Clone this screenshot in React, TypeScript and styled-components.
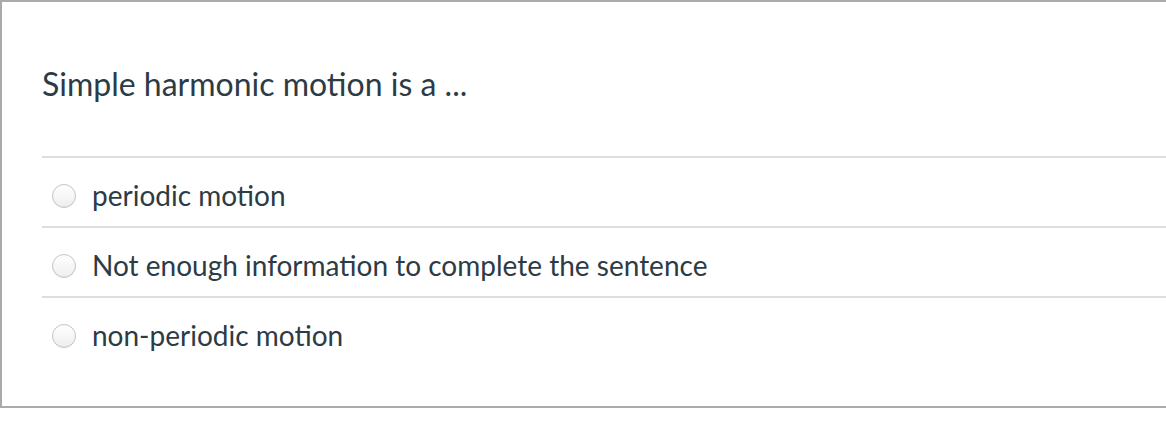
import styled, { createGlobalStyle } from "styled-components";

const GlobalStyle = createGlobalStyle`
	html, body {
		margin: 0;
		padding: 0;
		background: #fff;
		overflow: hidden;
	}
	body {
		font-family: Lato, "Open Sans", "Liberation Sans", sans-serif;
		color: #2d3b45;
	}
`;

const answers = [
	"periodic motion",
	"Not enough information to complete the sentence",
	"non-periodic motion",
];

export default function App() {
	return (
		<>
			<GlobalStyle />
			<QuestionBox>
				<QuestionText>Simple harmonic motion is a ...</QuestionText>
				<AnswerList>
					{answers.map((a) => (
						<AnswerRow key={a}>
							<Radio />
							<AnswerLabel>{a}</AnswerLabel>
						</AnswerRow>
					))}
				</AnswerList>
			</QuestionBox>
		</>
	);
}

const QuestionBox = styled.div`
	box-sizing: border-box;
	width: 100%;
	height: 408px;
	border: 2px solid #aaaaaa;
	border-right: none;
	padding: 0 0 0 40px;
`;

const QuestionText = styled.div`
	height: 154px;
	display: flex;
	align-items: center;
	padding-top: 10px;
	box-sizing: border-box;
	font-size: 32px;
	line-height: 1;
`;

const AnswerList = styled.div`
	display: flex;
	flex-direction: column;
`;

const AnswerRow = styled.label`
	display: flex;
	align-items: center;
	gap: 17px;
	height: 70px;
	box-sizing: border-box;
	border-top: 2px solid #dedede;
	padding-left: 10px;
	padding-top: 5px;
`;

const Radio = styled.span`
	flex: none;
	width: 24px;
	height: 24px;
	box-sizing: border-box;
	border-radius: 50%;
	border: 1px solid #c4c4c4;
	background: linear-gradient(#ffffff, #eeeeee);
	box-shadow: inset 0 -1px 1px rgba(0, 0, 0, 0.04);
	margin-top: 3px;
`;

const AnswerLabel = styled.span`
	font-size: 28px;
	line-height: 1;
	margin-left: -1px;
`;
